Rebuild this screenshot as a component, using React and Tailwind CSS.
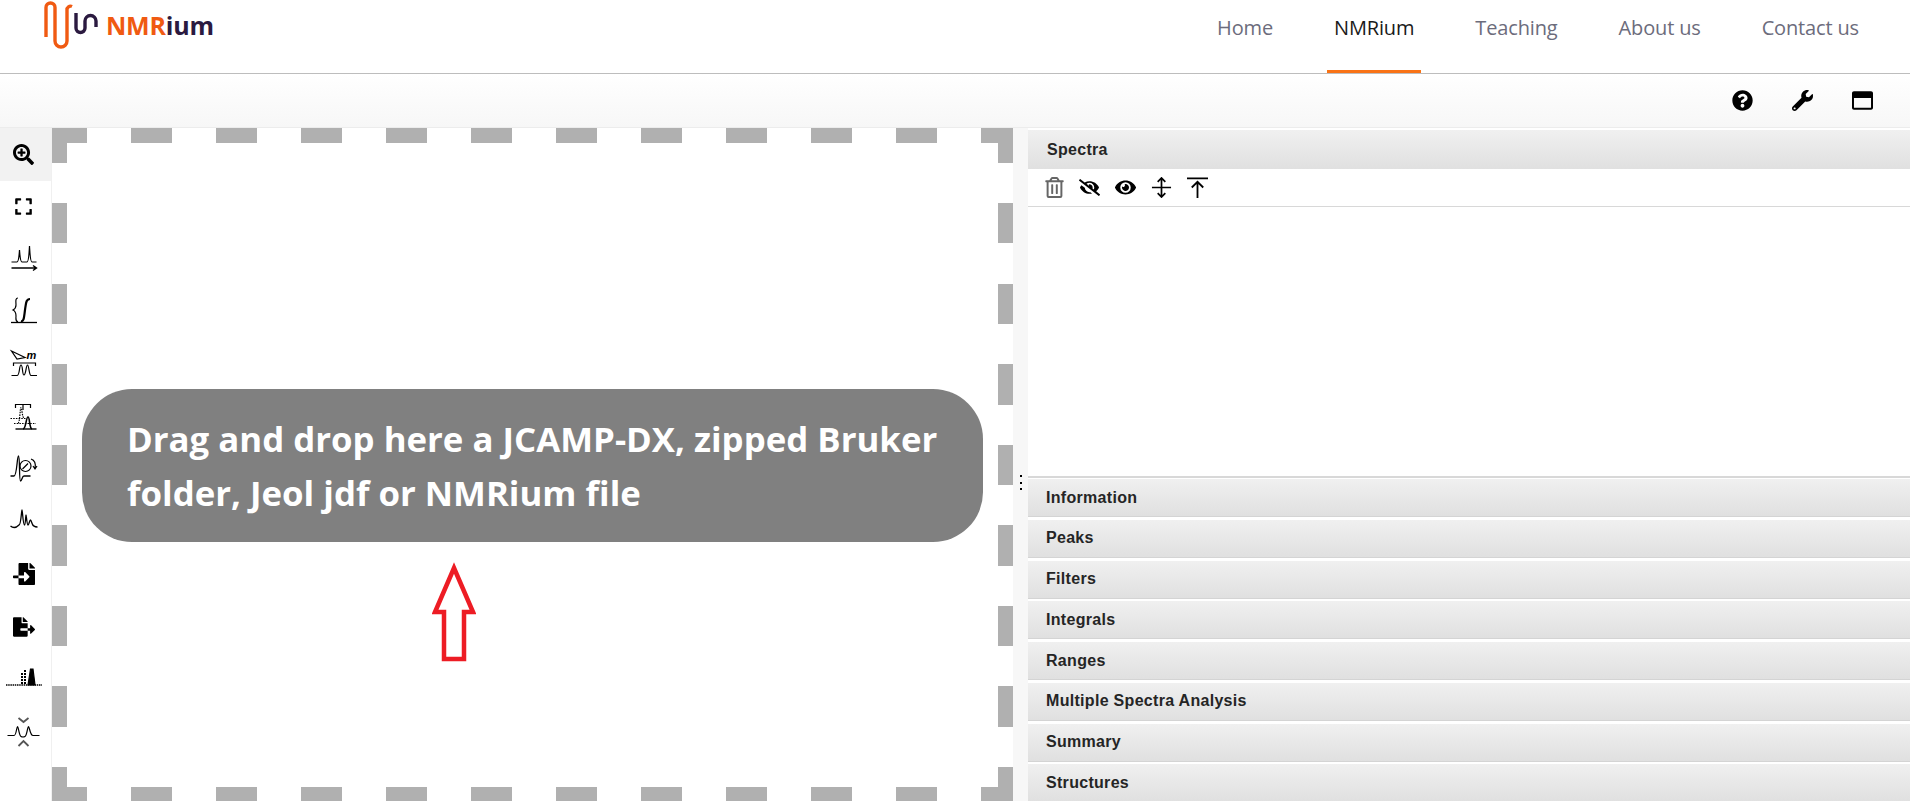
import {
  FaQuestionCircle,
  FaWrench,
  FaRegWindowMaximize,
  FaRegTrashAlt,
  FaEye,
  FaEyeSlash,
  FaSearchPlus,
  FaExpand,
  FaFileImport,
  FaFileExport,
} from "react-icons/fa";

const navItems = ["Home", "NMRium", "Teaching", "About us", "Contact us"];
const panels = [
  "Information",
  "Peaks",
  "Filters",
  "Integrals",
  "Ranges",
  "Multiple Spectra Analysis",
  "Summary",
  "Structures",
];

function Logo() {
  return (
    <div className="flex h-[73px] items-start pl-11">
      <svg width="60" height="50" viewBox="0 0 60 50" fill="none">
        <path d="M2 37V7.500a4.500 4.500 0 0 1 9 0V41a6 6 0 0 0 12 0V10a3.500 3.500 0 0 1 5-3.500" stroke="#f05a12" strokeWidth="3.400" />
        <path d="M32 13V28a4.500 4.500 0 0 0 9 0V21a5.500 5.500 0 0 1 11 0v6" stroke="#2b1a40" strokeWidth="3.400" />
      </svg>
    </div>
  );
}

function Header() {
  return (
    <header className="relative flex h-[74px] shrink-0 justify-between border-b border-b-[#bdbdbd] bg-white">
      <Logo />
      <div className="absolute left-[106px] top-[9px] flex font-['Open_Sans',sans-serif] text-[25px] font-bold leading-[32px] tracking-[-0.2px]">
        <span className="text-[#f05a12]">NMR</span>
        <span className="text-[#2b1a40]">ium</span>
      </div>
      <nav className="flex gap-[47px] pr-[44px] font-['Open_Sans',sans-serif] text-[20px] leading-[28px] tracking-[-0.15px]">
        {navItems.map((item) => (
          <a
            key={item}
            className={
              item === "NMRium"
                ? "h-[73px] border-b-[3px] border-b-[#f97316] px-[7px] pt-[14px] text-[#1a1a1a]"
                : "h-[73px] px-[7px] pt-[14px] text-[#6c6c7c]"
            }
          >
            {item}
          </a>
        ))}
      </nav>
    </header>
  );
}

// small hand drawn tool glyphs from the left bar
function ToolCell({ children, active }) {
  return (
    <div className={`flex h-[52.500px] w-[51px] shrink-0 items-center justify-center pr-[4px] ${active ? "bg-[#f2f2f2]" : ""}`}>
      {children}
    </div>
  );
}

function Glyph({ children, w = 30, h = 30 }) {
  return (
    <svg className="shrink-0" width={w} height={h} viewBox={`0 0 ${w} ${h}`} fill="none" stroke="#000" strokeWidth="1.200">
      {children}
    </svg>
  );
}

function Toolbar() {
  return (
    <aside className="flex w-[52px] shrink-0 flex-col border-r border-r-[#f0f0f0] bg-white">
      <ToolCell active>
        <FaSearchPlus size={21} />
      </ToolCell>
      <ToolCell>
        <FaExpand size={19} />
      </ToolCell>
      <ToolCell>
        <Glyph>
          <path d="M2.500 18H8C9.800 18 10 12 10.500 6C11 12 11.200 18 13 18H18C19.800 18 20 10 20.500 2C21 10 21.200 18 23 18H27.500" />
          <path d="M2.500 24H27M24 21.500L27.500 24L24 26.500" strokeWidth="1.400" />
        </Glyph>
      </ToolCell>
      <ToolCell>
        <Glyph>
          <path d="M9 1C6 1 7 5 7 8S6 12 4 13C6 14 7 16 7 19S6 24 9 25" />
          <path d="M12 24C15 25 15 20 16 13S17 2 21 2" strokeWidth="2.200" />
          <path d="M2 25.500H28" strokeWidth="1.300" />
        </Glyph>
      </ToolCell>
      <ToolCell>
        <Glyph>
          <path d="M2.500 2L16 8.500L8 10Z" />
          <path d="M4.500 17V14H26.500V17" />
          <path d="M2.500 26.500H8C11 26.500 10 16 12 16S13 26 15 26S17 16 18.500 16S20 26.500 22 26.500H28" />
          <text x="17.500" y="10" fontSize="11" fontStyle="italic" fontWeight="700" fontFamily="Liberation Sans, sans-serif" fill="#000" stroke="none">m</text>
        </Glyph>
      </ToolCell>
      <ToolCell>
        <Glyph>
          <path d="M6.500 6V2.500H21.500V6M14 2.500V8" />
          <path d="M1.500 16.500H17M5 21.500H27" strokeDasharray="1.500 1.200" />
          <path d="M9 21C11 21 11 5.500 12 5.500S13 15 15 16" strokeDasharray="1.500 1" />
          <path d="M6.500 27H27.500" strokeWidth="1.400" />
          <path d="M14 27C17 27 17 15 19 15S20 26 23 27" strokeWidth="1.600" />
        </Glyph>
      </ToolCell>
      <ToolCell>
        <Glyph>
          <path d="M1.500 22H5C8 22 8 2 9.500 2C11 2 10 27 11.500 27C13 27 13 22 15 22H21.500" strokeWidth="1.300" />
          <circle cx="16.500" cy="12" r="5.500" />
          <path d="M13.500 15L19 9.500M22 5C25 6 27 9 26 14M24 12L26 15L28 12" />
        </Glyph>
      </ToolCell>
      <ToolCell>
        <Glyph>
          <path d="M1.500 19C5 22 8 20 10 18C12 18 12.500 3 13 3S14 18 15.500 18C16.500 18 16.700 8 17 8S18 18 19 18C20 18 20.500 13 21.500 13S23 19 25 19C26 20 27 20 28.500 20" strokeWidth="1.300" />
        </Glyph>
      </ToolCell>
      <ToolCell>
        <FaFileImport size={22} />
      </ToolCell>
      <ToolCell>
        <FaFileExport size={22} />
      </ToolCell>
      <ToolCell>
        <Glyph w={36}>
          <path d="M0 21H36" strokeWidth="1.500" strokeDasharray="1.500 .7" />
          <path d="M22 21L24.500 5L27 5L29 21Z" fill="#000" />
          <path d="M16 20V8M19 20V6" strokeWidth="2" strokeDasharray="2 1" />
        </Glyph>
      </ToolCell>
      <ToolCell>
        <Glyph w={36}>
          <path d="M1.500 18.500H8C10.500 18.500 10.500 9.500 11.500 9.500S13 18.500 15 19.500C16 20 18 20 19 19.500C21 18.500 21.500 9.500 22.500 9.500S24 18.500 27 18.500H33.500" />
          <path d="M12.500 1L17.500 5L22.500 1M12.500 29L17.500 24L22.500 29" stroke="#555" strokeWidth="1.800" />
        </Glyph>
      </ToolCell>
    </aside>
  );
}

function DashedEdges() {
  return (
    <>
      <div className="absolute inset-x-0 top-0 h-[15px] bg-[repeating-linear-gradient(90deg,#b0b0b0_0_41px,transparent_41px_85px)] bg-[position:-6px_0]" />
      <div className="absolute inset-x-0 bottom-0 h-[14px] bg-[repeating-linear-gradient(90deg,#b0b0b0_0_41px,transparent_41px_85px)] bg-[position:-6px_0]" />
      <div className="absolute inset-y-0 left-0 w-[15px] bg-[repeating-linear-gradient(180deg,#b0b0b0_0_40px,transparent_40px_80.500px)] bg-[position:0_-5px]" />
      <div className="absolute inset-y-0 right-0 w-[15px] bg-[repeating-linear-gradient(180deg,#b0b0b0_0_40px,transparent_40px_80.500px)] bg-[position:0_-5px]" />
    </>
  );
}

function DropZone() {
  return (
    <main className="relative flex w-[961px] shrink-0 flex-col bg-white pt-[261px]">
      <DashedEdges />
      <div className="ml-[30px] flex h-[153px] w-[901px] items-center rounded-[50px] bg-[#808080] pl-[45px] pr-[40px] font-['Open_Sans',sans-serif] text-[34.800px] font-bold leading-[54px] text-white">
        Drag and drop here a JCAMP-DX, zipped Bruker folder, Jeol jdf or NMRium file
      </div>
      <svg className="ml-[380px] mt-[20px]" width="44" height="100" viewBox="0 0 44 100" fill="none">
        <path d="M22 6L41 50H32V97H12V50H3Z" stroke="#ed1c24" strokeWidth="4.500" />
      </svg>
    </main>
  );
}

function PanelHeader({ title }) {
  return (
    <div className="mb-[2.750px] flex h-[38px] shrink-0 items-center border-b border-b-[#d4d4d4] bg-gradient-to-b from-[#f0f0f0] to-[#e0e0e0] pl-[18px] font-['Liberation_Sans',sans-serif] text-[16px] font-bold tracking-[0.3px] text-[#252525]">
      {title}
    </div>
  );
}

function SidePanel() {
  return (
    <section className="flex min-w-0 flex-1 flex-col bg-white">
      <div className="mt-[2px] flex h-[39px] shrink-0 items-center bg-gradient-to-b from-[#f0f0f0] to-[#e0e0e0] pl-[19px] font-['Liberation_Sans',sans-serif] text-[16px] font-bold tracking-[0.3px] text-[#252525]">
        Spectra
      </div>
      <div className="flex h-[38px] shrink-0 items-center gap-[15px] border-b border-b-[#d8d8d8] pl-[16px]">
        <FaRegTrashAlt size={21} className="mr-[-1px] text-[#666]" />
        <FaEyeSlash size={21} />
        <FaEye size={21} />
        <svg width="21" height="21" viewBox="0 0 22 22" fill="none" stroke="#000" strokeWidth="1.800">
          <path d="M1 11h20M11 1v20M7 5l4-4 4 4M7 17l4 4 4-4" />
        </svg>
        <svg width="21" height="21" viewBox="0 0 22 22" fill="none" stroke="#000" strokeWidth="1.900">
          <path d="M0 1.500h22M11 22V6M5 11l6-6 6 6" />
        </svg>
      </div>
      <div className="h-[271px] shrink-0 border-b-2 border-b-[#d8d8d8]" />
      <div className="flex shrink-0 flex-col pt-[1px]">
        {panels.map((p) => (
          <PanelHeader key={p} title={p} />
        ))}
      </div>
    </section>
  );
}

export default function App() {
  return (
    <div className="flex h-[801px] w-[1910px] flex-col overflow-hidden bg-white">
      <Header />
      <div className="flex h-[54px] shrink-0 items-center justify-end gap-[39px] border-b border-b-[#ececec] bg-gradient-to-b from-white to-[#f7f7f7] pr-[37px]">
        <FaQuestionCircle size={21} />
        <FaWrench size={21} />
        <FaRegWindowMaximize size={21} />
      </div>
      <div className="flex min-h-0 flex-1">
        <Toolbar />
        <DropZone />
        <div className="relative flex w-[15px] shrink-0 justify-center bg-[#f7f7f7]">
          <span className="absolute top-[347px] flex flex-col gap-[4.500px]">
            <i className="h-[2px] w-[2px] bg-black" />
            <i className="h-[2px] w-[2px] bg-black" />
            <i className="h-[2px] w-[2px] bg-black" />
          </span>
        </div>
        <SidePanel />
      </div>
    </div>
  );
}
